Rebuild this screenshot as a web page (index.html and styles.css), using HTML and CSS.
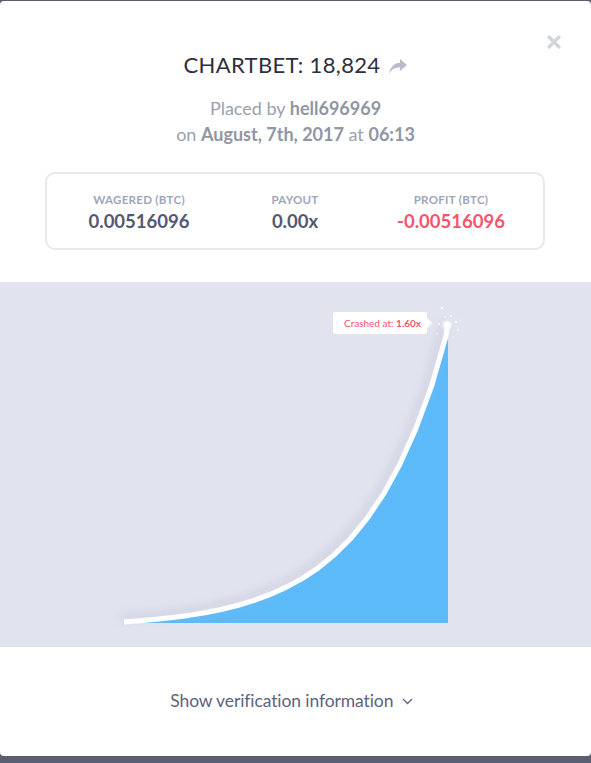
FILE: index.html
```html
<!DOCTYPE html>
<html>
<head>
<meta charset="utf-8">
<link rel="stylesheet" href="styles.css">
</head>
<body>
<div class="modal">
  <button class="close" aria-label="Close">
    <svg width="14" height="14" viewBox="0 0 14 14"><path d="M2 2 L12 12 M12 2 L2 12" stroke="#d2d4d9" stroke-width="3.2" stroke-linecap="round"/></svg>
  </button>
  <header class="head">
    <h1 class="title">CHARTBET: 18,824
      <svg class="share" width="18" height="15" viewBox="0 0 18 15"><path d="M11 0 L18 6 L11 12 L11 8.5 C6 8.5 2.5 10 0 15 C0.8 9 4.5 4.2 11 3.8 Z" fill="#b9bdc7"/></svg>
    </h1>
    <p class="meta">Placed by <b>hell696969</b><br>on <b>August, 7th, 2017</b> at <b>06:13</b></p>
  </header>
  <div class="stats">
    <div class="stat"><span class="label">WAGERED (BTC)</span><span class="value">0.00516096</span></div>
    <div class="stat"><span class="label">PAYOUT</span><span class="value">0.00x</span></div>
    <div class="stat"><span class="label">PROFIT (BTC)</span><span class="value neg">-0.00516096</span></div>
  </div>
  <div class="chart">
    <svg class="graph" width="591" height="365" viewBox="0 0 591 365">
      <defs>
        <filter id="sh" x="-20%" y="-20%" width="140%" height="140%">
          <feDropShadow dx="-4" dy="-4" stdDeviation="5" flood-color="#a9adbf" flood-opacity="0.45"/>
        </filter>
        <filter id="gl" x="-50%" y="-50%" width="200%" height="200%">
          <feGaussianBlur stdDeviation="1.2"/>
        </filter>
      </defs>
      <polygon fill="#5dbaf8" points="124,340 140.2,338.8 156.4,337.3 172.6,335.6 188.8,333.4 205,330.7 221.2,327.5 237.4,323.5 253.6,318.6 269.8,312.7 286,305.4 302.2,296.6 318.4,285.8 334.6,272.6 350.8,256.4 367,236.7 383.2,212.7 399.4,183.3 415.6,147.4 431.8,103.6 448,50 448,341 124,341"/>
      <polyline filter="url(#sh)" fill="none" stroke="#ffffff" stroke-width="5" stroke-linejoin="round" points="124,340 140.2,338.8 156.4,337.3 172.6,335.6 188.8,333.4 205,330.7 221.2,327.5 237.4,323.5 253.6,318.6 269.8,312.7 286,305.4 302.2,296.6 318.4,285.8 334.6,272.6 350.8,256.4 367,236.7 383.2,212.7 399.4,183.3 415.6,147.4 431.8,103.6 446,54 447.5,44"/>
      <circle cx="447" cy="43" r="4" fill="#ffffff" filter="url(#gl)"/>
      <g fill="#ffffff">
        <circle cx="442" cy="26" r="1.2"/>
        <circle cx="451" cy="34" r="1"/>
        <circle cx="456" cy="40" r="0.9"/>
        <circle cx="439" cy="42" r="0.9"/>
        <circle cx="458" cy="48" r="0.8" opacity="0.8"/>
        <circle cx="437" cy="52" r="0.8" opacity="0.7"/>
        <circle cx="453" cy="55" r="0.8" opacity="0.7"/>
        <circle cx="445" cy="35" r="0.8" opacity="0.8"/>
        <circle cx="461" cy="38" r="0.7" opacity="0.6"/>
        <circle cx="435" cy="31" r="0.6" opacity="0.5"/>
      </g>
    </svg>
    <div class="tip">Crashed at: <b>1.60x</b></div>
  </div>
  <div class="foot">
    <span class="verify">Show verification information
      <svg width="11" height="7" viewBox="0 0 11 7"><path d="M1 1 L5.5 5.5 L10 1" fill="none" stroke="#5d6281" stroke-width="1.3"/></svg>
    </span>
  </div>
</div>
</body>
</html>
```

FILE: styles.css
```css
* { box-sizing: border-box; }
html, body { margin: 0; padding: 0; }
body {
  background: #5b5e70;
  font-family: Lato, "Open Sans", sans-serif;
  height: 763px;
  overflow: hidden;
}
.modal {
  position: relative;
  margin-top: 1px;
  height: 755px;
  background: #ffffff;
  border-radius: 4px;
  display: flex;
  flex-direction: column;
}
.close {
  position: absolute;
  top: 34px;
  right: 30px;
  width: 14px;
  height: 14px;
  padding: 0;
  border: 0;
  background: none;
  display: block;
}
.close svg { display: block; }
.head {
  padding-top: 52px;
  text-align: center;
}
.title {
  margin: 0;
  font-size: 22px;
  line-height: 24px;
  font-weight: 400;
  color: #2d3040;
  letter-spacing: 0.35px;
}
.share {
  vertical-align: -1px;
  margin-left: 3px;
}
.meta {
  margin: 18px 0 0;
  font-size: 18px;
  line-height: 26px;
  color: #9ba0ad;
}
.meta b { font-weight: 700; color: #9096a4; }
.stats {
  margin: 25px 46px 0 45px;
  height: 78px;
  border: 2px solid #e6e8ec;
  border-radius: 10px;
  display: flex;
  padding: 0 14px;
  align-items: center;
}
.stat {
  flex: 1;
  display: flex;
  flex-direction: column;
  align-items: center;
  padding-top: 2px;
}
.label {
  font-size: 11.5px;
  font-weight: 700;
  color: #a0a6b9;
  line-height: 14px;
  letter-spacing: 0.3px;
}
.value {
  font-size: 18.5px;
  font-weight: 700;
  color: #525873;
  line-height: 22px;
  margin-top: 3px;
}
.value.neg { color: #f5546c; }
.chart {
  position: relative;
  margin-top: 32px;
  height: 365px;
  background: #e1e4ef;
}
.graph { display: block; }
.tip {
  position: absolute;
  left: 333px;
  top: 30px;
  width: 94px;
  height: 22px;
  background: #ffffff;
  border-radius: 2px;
  font-size: 10px;
  line-height: 22px;
  color: #f4566e;
  padding-left: 11px;
  white-space: nowrap;
}
.tip::after {
  content: "";
  position: absolute;
  right: -5px;
  top: 6px;
  border-left: 5px solid #ffffff;
  border-top: 5px solid transparent;
  border-bottom: 5px solid transparent;
}
.tip b { font-weight: 700; }
.foot {
  flex: 1;
  display: flex;
  align-items: center;
  justify-content: center;
  padding-bottom: 2px;
}
.verify {
  font-size: 17.5px;
  color: #5d6281;
  letter-spacing: -0.1px;
  margin-left: -8px;
}
.verify svg { margin-left: 4px; vertical-align: 2px; }
```
